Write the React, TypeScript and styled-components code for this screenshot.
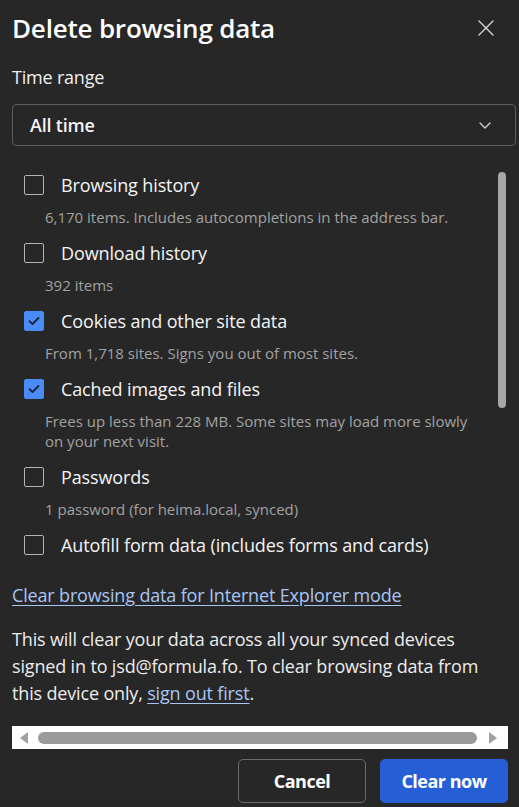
import React from "react";
import styled, {createGlobalStyle} from "styled-components";

const GlobalStyle = createGlobalStyle`
  html, body {
    margin: 0;
    padding: 0;
    background: #272727;
  }
  body {
    font-family: "Open Sans", "Noto Sans", sans-serif;
    color: #f2f2f2;
  }
`;

const Dialog = styled.div`
  width: 519px;
  height: 807px;
  overflow: hidden;
  box-sizing: border-box;
  padding: 10px 11px 0 12px;
  background: #272727;
`;

const Header = styled.div`
  display: flex;
  align-items: center;
  justify-content: space-between;
  height: 36px;
`;

const Title = styled.h1`
  margin: 0;
  font-size: 26px;
  line-height: 36px;
  font-weight: 600;
  color: #ffffff;
  letter-spacing: -0.2px;
`;

const CloseButton = styled.button`
  display: flex;
  align-items: center;
  justify-content: center;
  width: 28px;
  height: 28px;
  margin-right: 8px;
  padding: 0;
  border: none;
  background: transparent;
  color: #d6d6d6;
  cursor: pointer;
`;

const FieldLabel = styled.div`
  margin-top: 19px;
  font-size: 18px;
  line-height: 24px;
  letter-spacing: -0.2px;
  color: #f0f0f0;
`;

const SelectBox = styled.div`
  margin-top: 15px;
  width: calc(100% + 8px);
  height: 42px;
  box-sizing: border-box;
  display: flex;
  align-items: center;
  justify-content: space-between;
  padding: 0 24px 0 17px;
  border: 1px solid #5c5c5c;
  border-radius: 4px;
  font-size: 18px;
  font-weight: 600;
  letter-spacing: -0.2px;
  color: #f4f4f4;
`;

const ScrollRegion = styled.div`
  margin-top: 24px;
  height: 390px;
  display: flex;
`;

const List = styled.div`
  flex: 1;
  display: flex;
  flex-direction: column;
  gap: 11px;
  padding-left: 12px;
`;

const Item = styled.div`
  display: flex;
  flex-direction: column;
`;

const CheckRow = styled.label`
  display: flex;
  align-items: center;
  gap: 17px;
  height: 30px;
  font-size: 18px;
  letter-spacing: -0.12px;
  color: #f4f4f4;
`;

const Box = styled.span<{ $checked?: boolean }>`
  width: 20px;
  height: 20px;
  box-sizing: border-box;
  flex: none;
  display: flex;
  align-items: center;
  justify-content: center;
  border-radius: 2px;
  border: 1.5px solid ${({ $checked }) => ($checked ? "#4a8cf7" : "#b4b4b4")};
  background: ${({ $checked }) => ($checked ? "#4a8cf7" : "transparent")};
`;

const Description = styled.div`
  margin-top: 7px;
  padding-left: 21px;
  font-size: 15px;
  line-height: 20px;
  color: #a2a2a2;
  max-width: 428px;
`;

const ScrollTrack = styled.div`
  width: 8px;
  margin-right: 2px;
  padding-top: 2px;
`;

const ScrollThumb = styled.div`
  width: 8px;
  height: 236px;
  border-radius: 4px;
  background: #a6a6a6;
`;

const Link = styled.a`
  display: block;
  margin-top: 22px;
  font-size: 18px;
  line-height: 27px;
  letter-spacing: -0.16px;
  color: #a8c5f5;
  text-decoration: underline;
  text-underline-offset: 3px;
`;

const Notice = styled.p`
  margin: 17px 0 0;
  font-size: 18px;
  line-height: 27px;
  letter-spacing: -0.16px;
  color: #ececec;

  a {
    color: #a8c5f5;
    text-decoration: underline;
    text-underline-offset: 3px;
  }
`;

const HScrollBar = styled.div`
  margin-top: 19px;
  height: 23px;
  background: #ffffff;
  display: flex;
  align-items: center;
  padding: 0 11px 0 8px;
`;

const Arrow = styled.span<{ $dir: "left" | "right" }>`
  width: 0;
  height: 0;
  border-top: 6px solid transparent;
  border-bottom: 6px solid transparent;
  ${({ $dir }) =>
    $dir === "left"
      ? "border-right: 8px solid #a0a0a0;"
      : "border-left: 8px solid #a0a0a0;"}
`;

const HThumb = styled.div`
  flex: 1;
  height: 12px;
  margin: 0 12px 0 10px;
  border-radius: 6px;
  background: #9a9a9a;
`;

const Footer = styled.div`
  margin-top: 10px;
  display: flex;
  justify-content: flex-end;
  gap: 14px;
`;

const Button = styled.button<{ $primary?: boolean }>`
  width: 128px;
  height: 44px;
  border-radius: 5px;
  font-family: inherit;
  font-size: 18px;
  font-weight: 700;
  letter-spacing: -0.5px;
  color: #ffffff;
  cursor: pointer;
  border: 1px solid ${({ $primary }) => ($primary ? "#265fd5" : "#6b6b6b")};
  background: ${({ $primary }) => ($primary ? "#265fd5" : "transparent")};
`;

type Option = { label: string; desc?: string; checked?: boolean };

const options: Option[] = [
  { label: "Browsing history", desc: "6,170 items. Includes autocompletions in the address bar." },
  { label: "Download history", desc: "392 items" },
  { label: "Cookies and other site data", desc: "From 1,718 sites. Signs you out of most sites.", checked: true },
  {
    label: "Cached images and files",
    desc: "Frees up less than 228 MB. Some sites may load more slowly on your next visit.",
    checked: true,
  },
  { label: "Passwords", desc: "1 password (for heima.local, synced)" },
  { label: "Autofill form data (includes forms and cards)" },
];

const Check = () => (
  <svg width="12" height="10" viewBox="0 0 12 10">
    <path d="M1.5 5.2 L4.5 8 L10.5 2" fill="none" stroke="#1c2230" strokeWidth="1.8" strokeLinecap="round" strokeLinejoin="round" />
  </svg>
);

export default function App() {
  return (
    <>
      <GlobalStyle />
      <Dialog>
        <Header>
          <Title>Delete browsing data</Title>
          <CloseButton aria-label="Close">
            <svg width="16" height="16" viewBox="0 0 16 16">
              <path d="M1 1 L15 15 M15 1 L1 15" stroke="currentColor" strokeWidth="1.4" strokeLinecap="round" />
            </svg>
          </CloseButton>
        </Header>
        <FieldLabel>Time range</FieldLabel>
        <SelectBox>
          <span>All time</span>
          <svg width="12" height="7" viewBox="0 0 12 7">
            <path d="M1 1 L6 6 L11 1" fill="none" stroke="#cfcfcf" strokeWidth="1.4" strokeLinecap="round" strokeLinejoin="round" />
          </svg>
        </SelectBox>
        <ScrollRegion>
          <List>
            {options.map((o) => (
              <Item key={o.label}>
                <CheckRow>
                  <Box $checked={o.checked}>{o.checked && <Check />}</Box>
                  {o.label}
                </CheckRow>
                {o.desc && <Description>{o.desc}</Description>}
              </Item>
            ))}
          </List>
          <ScrollTrack>
            <ScrollThumb />
          </ScrollTrack>
        </ScrollRegion>
        <Link href="#">Clear browsing data for Internet Explorer mode</Link>
        <Notice>
          This will clear your data across all your synced devices signed in to jsd@formula.fo. To clear browsing
          data from this device only, <a href="#">sign out first</a>.
        </Notice>
        <HScrollBar>
          <Arrow $dir="left" />
          <HThumb />
          <Arrow $dir="right" />
        </HScrollBar>
        <Footer>
          <Button>Cancel</Button>
          <Button $primary>Clear now</Button>
        </Footer>
      </Dialog>
    </>
  );
}
